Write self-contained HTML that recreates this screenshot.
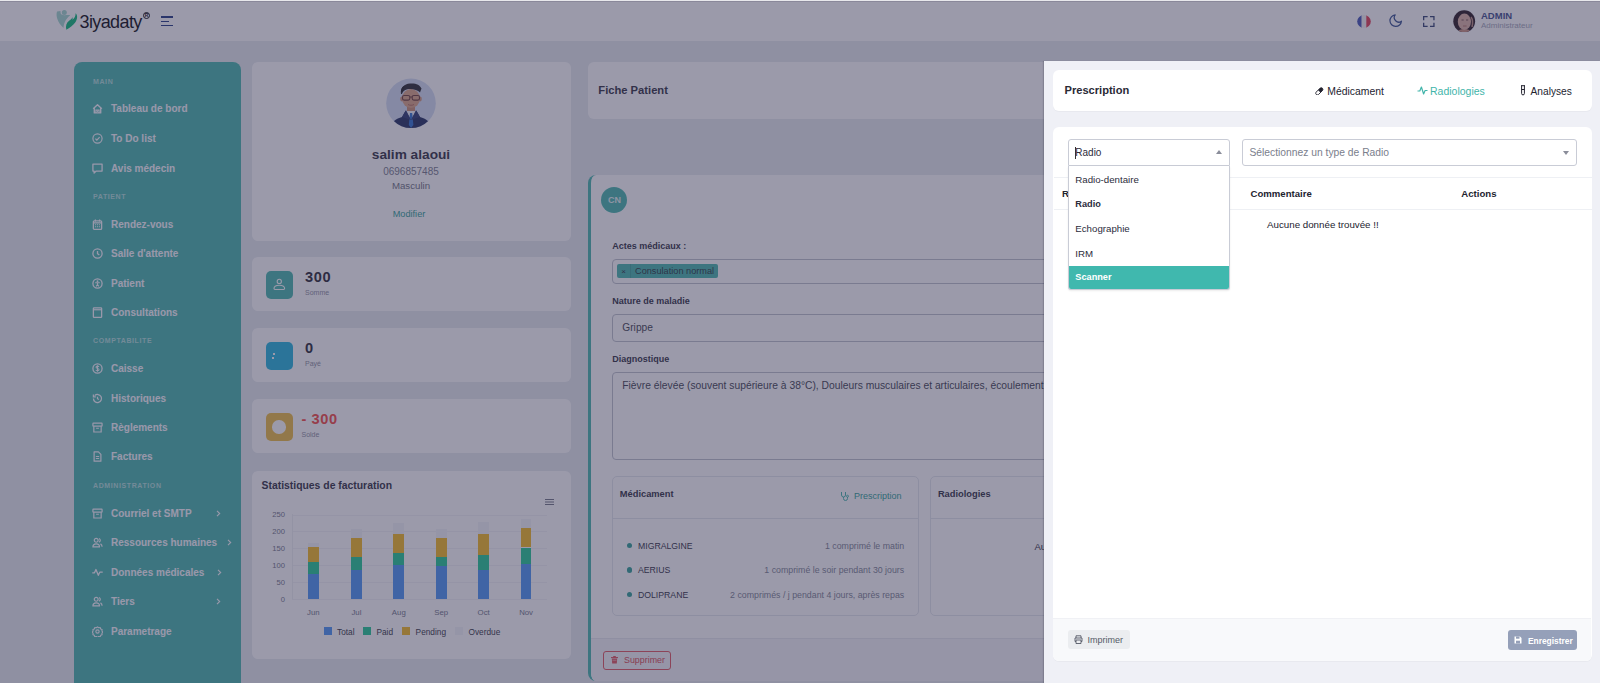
<!DOCTYPE html>
<html><head><meta charset="utf-8">
<style>
*{margin:0;padding:0;box-sizing:border-box}
html,body{width:1600px;height:683px;overflow:hidden;background:#e7ebef;font-family:"Liberation Sans",sans-serif;position:relative}
.a{position:absolute}
.t{position:absolute;white-space:nowrap;line-height:1}
.card{position:absolute;background:#fff;border-radius:6px}
#hdr{left:0;top:0;width:1600px;height:41px;background:#fff}
#side{left:74px;top:62px;width:167px;height:640px;background:#43b5ab;border-radius:8px 8px 0 0}
.cat{position:absolute;left:19px;font-size:7px;font-weight:bold;letter-spacing:0.6px;color:#a4dcd6;white-space:nowrap;line-height:1}
.mi{position:absolute;left:18px;height:14px;width:150px;color:#f4f6fb;font-size:11px;white-space:nowrap;line-height:14px}
.mi svg{position:absolute;left:0;top:1px;width:12px;height:12px}
.mi span{position:absolute;left:19px;top:0}
.mi .chev{position:absolute;top:-1px;font-size:12px}
#ovl{left:0;top:0;width:1600px;height:683px;background:rgba(55,53,85,0.5)}
</style></head>
<body>
<div class="a" id="hdr">
<svg class="a" style="left:52px;top:6px" width="32" height="28" viewBox="0 0 32 28">
<circle cx="12.3" cy="6.4" r="2.5" fill="#9fd6cc"/>
<path d="M5 5.6C3.6 10 5.5 16.5 11.5 22 11.8 18 13 13.5 18.3 9.3 15 8.6 12 10 9.6 8.6 8.6 7.8 8.4 6.3 8.5 4.9z" fill="#9fd6cc"/>
<path d="M23.6 7.2C25.7 9 25.7 13 23.2 16.5 21.2 19.4 17.6 22 14.3 23.7 13.4 20 14.4 16.6 17.4 14.6 19 13.5 20.1 12.4 20.9 11.1L20.4 13.7C22.6 12.2 23.7 10 23.6 7.2z" fill="#07b877"/>
</svg>
<div class="t" style="left:79.5px;top:13.46px;font-size:18px;color:#05050a;letter-spacing:-0.6px;">3iyadaty</div>
<div class="a" style="left:143px;top:12px;width:7px;height:7px;border:1.3px solid #05050a;border-radius:50%;font-size:5px;line-height:4.5px;text-align:center;color:#05050a;font-weight:bold">R</div>
<div class="a" style="left:160.6px;top:16.4px;width:12px;height:1.3px;background:#1d3580"></div><div class="a" style="left:160.6px;top:20.8px;width:8.2px;height:1.3px;background:#1d3580"></div><div class="a" style="left:160.6px;top:25.2px;width:12px;height:1.3px;background:#1d3580"></div>
<svg class="a" style="left:1357px;top:15px" width="14" height="13" viewBox="0 0 14 13"><defs><clipPath id="fc"><ellipse cx="7" cy="6.5" rx="6.8" ry="6.4"/></clipPath></defs>
<g clip-path="url(#fc)"><rect x="0" y="0" width="4.7" height="13" fill="#3f51b5"/><rect x="4.7" y="0" width="4.6" height="13" fill="#f2f2f2"/><rect x="9.3" y="0" width="4.7" height="13" fill="#e0384f"/></g></svg>
<svg class="a" style="left:1387.8px;top:13.1px" width="15.4" height="15.4" viewBox="0 0 24 24"><path d="M21 12.79A9 9 0 1 1 11.21 3 7 7 0 0 0 21 12.79z" fill="none" stroke="#2e4a8c" stroke-width="1.9" stroke-linejoin="round"/></svg>
<svg class="a" style="left:1423.4px;top:15.6px" width="11.6" height="11" viewBox="0 0 11.6 11"><path d="M0.65 4.3V0.65h4M7 0.65h3.95v3.65M10.95 6.7v3.65H7M4.65 10.35H0.65V6.7" fill="none" stroke="#2e3f70" stroke-width="1.3"/></svg>
<svg class="a" style="left:1452px;top:9px" width="25" height="25" viewBox="0 0 25 25"><defs><clipPath id="ua"><circle cx="12.2" cy="12.2" r="10.9"/></clipPath></defs>
<circle cx="12.2" cy="12.2" r="11.6" fill="#f4f5fa"/>
<g clip-path="url(#ua)"><rect width="25" height="25" fill="#24141c"/>
<path d="M5 26c0-4 2-6 7.2-6s7.2 2 7.2 6z" fill="#c98f7c"/>
<ellipse cx="12.4" cy="12.8" rx="6.6" ry="8.2" fill="#dcb0a2"/>
<path d="M19 8c1.5 2 2 6 1 10" stroke="#b88a7e" stroke-width="1.5" fill="none"/>
<path d="M9.5 11h2.2M14 11h2.2" stroke="#6a4a4a" stroke-width="0.9"/>
<path d="M11 17h3.6" stroke="#b27068" stroke-width="1.1"/>
</g></svg>
<div class="t" style="left:1481.0px;top:11.26px;font-size:9.5px;font-weight:bold;color:#3b4a8a;">ADMIN</div>
<div class="t" style="left:1481.0px;top:22.23px;font-size:8px;color:#a0a4b6;">Administrateur</div>
</div>
<div class="a" id="side"></div>
<div class="t" style="left:93.0px;top:78.27px;font-size:7px;font-weight:bold;letter-spacing:0.6px;color:#afdfda;">MAIN</div>
<div class="t" style="left:93.0px;top:192.87px;font-size:7px;font-weight:bold;letter-spacing:0.6px;color:#afdfda;">PATIENT</div>
<div class="t" style="left:93.0px;top:337.17px;font-size:7px;font-weight:bold;letter-spacing:0.6px;color:#afdfda;">COMPTABILITE</div>
<div class="t" style="left:93.0px;top:482.27px;font-size:7px;font-weight:bold;letter-spacing:0.6px;color:#afdfda;">ADMINISTRATION</div>
<svg class="a" style="left:91.8px;top:103.3px;color:#fbfaff" width="11" height="11" viewBox="0 0 12 12"><path d="M1.3 6.3L6 1.8l4.7 4.5M2.5 5.2V10.8h7V5.2" fill="none" stroke="currentColor" stroke-width="1.5" stroke-linejoin="round"/><path d="M4.3 10.8V7.8h3.4v3" fill="none" stroke="currentColor" stroke-width="1.3"/><circle cx="6" cy="9" r="0.7" fill="currentColor"/></svg>
<div class="t" style="left:111.0px;top:104.23px;font-size:10px;font-weight:bold;color:#fbfaff;">Tableau de bord</div>
<svg class="a" style="left:91.8px;top:133.1px;color:#fbfaff" width="11" height="11" viewBox="0 0 12 12"><circle cx="6" cy="6" r="5" fill="none" stroke="currentColor" stroke-width="1.3"/><path d="M3.7 6.2l1.6 1.5 3-3.2" fill="none" stroke="currentColor" stroke-width="1.3"/></svg>
<div class="t" style="left:111.0px;top:134.03px;font-size:10px;font-weight:bold;color:#fbfaff;">To Do list</div>
<svg class="a" style="left:91.8px;top:162.7px;color:#fbfaff" width="11" height="11" viewBox="0 0 12 12"><path d="M1 1.2h10v7.6H4.6L2.3 10.9V8.8H1z" fill="none" stroke="currentColor" stroke-width="1.4" stroke-linejoin="round"/></svg>
<div class="t" style="left:111.0px;top:163.63px;font-size:10px;font-weight:bold;color:#fbfaff;">Avis médecin</div>
<svg class="a" style="left:91.8px;top:218.8px;color:#fbfaff" width="11" height="11" viewBox="0 0 12 12"><rect x="1.5" y="2" width="9" height="9.3" rx="1" fill="none" stroke="currentColor" stroke-width="1.4"/><path d="M1.5 4.3h9M3.7 0.6v2.2M8.3 0.6v2.2" stroke="currentColor" stroke-width="1.3"/><path d="M3.3 6.2h1.2M5.4 6.2h1.2M7.5 6.2h1.2M3.3 8.4h1.2M5.4 8.4h1.2M7.5 8.4h1.2" stroke="currentColor" stroke-width="1.1"/></svg>
<div class="t" style="left:111.0px;top:219.73px;font-size:10px;font-weight:bold;color:#fbfaff;">Rendez-vous</div>
<svg class="a" style="left:91.8px;top:248.1px;color:#fbfaff" width="11" height="11" viewBox="0 0 12 12"><circle cx="6" cy="6" r="5" fill="none" stroke="currentColor" stroke-width="1.4"/><path d="M6 3.2V6.2l2 1.3" fill="none" stroke="currentColor" stroke-width="1.4"/></svg>
<div class="t" style="left:111.0px;top:249.03px;font-size:10px;font-weight:bold;color:#fbfaff;">Salle d'attente</div>
<svg class="a" style="left:91.8px;top:278.1px;color:#fbfaff" width="11" height="11" viewBox="0 0 12 12"><circle cx="6" cy="6" r="5" fill="none" stroke="currentColor" stroke-width="1.4"/><circle cx="6" cy="3.5" r="1" fill="currentColor"/><path d="M3.5 5.1h5M6 5.1v2.2M4.5 9.2l1.5-2 1.5 2" fill="none" stroke="currentColor" stroke-width="1.2"/></svg>
<div class="t" style="left:111.0px;top:279.04px;font-size:10px;font-weight:bold;color:#fbfaff;">Patient</div>
<svg class="a" style="left:91.8px;top:307.3px;color:#fbfaff" width="11" height="11" viewBox="0 0 12 12"><rect x="1.5" y="0.9" width="9" height="10.4" rx="0.8" fill="none" stroke="currentColor" stroke-width="1.4"/><path d="M1.5 3h9" stroke="currentColor" stroke-width="1.3"/></svg>
<div class="t" style="left:111.0px;top:308.24px;font-size:10px;font-weight:bold;color:#fbfaff;">Consultations</div>
<svg class="a" style="left:91.8px;top:362.9px;color:#fbfaff" width="11" height="11" viewBox="0 0 12 12"><circle cx="6" cy="6" r="5" fill="none" stroke="currentColor" stroke-width="1.4"/><path d="M7.6 4.2c-.4-.6-1-.8-1.7-.8-.9 0-1.5.5-1.5 1.2 0 1.6 3.3.9 3.3 2.6 0 .8-.7 1.3-1.7 1.3-.8 0-1.4-.3-1.8-.9M6 2.5v7" fill="none" stroke="currentColor" stroke-width="1.1"/></svg>
<div class="t" style="left:111.0px;top:363.84px;font-size:10px;font-weight:bold;color:#fbfaff;">Caisse</div>
<svg class="a" style="left:91.8px;top:392.7px;color:#fbfaff" width="11" height="11" viewBox="0 0 12 12"><path d="M1.6 6a4.4 4.4 0 1 0 1.3-3.1" fill="none" stroke="currentColor" stroke-width="1.4"/><path d="M1.5 1.6v2.7h2.7" fill="none" stroke="currentColor" stroke-width="1.3"/><path d="M6 4v2.2l1.5 1" fill="none" stroke="currentColor" stroke-width="1.3"/></svg>
<div class="t" style="left:111.0px;top:393.64px;font-size:10px;font-weight:bold;color:#fbfaff;">Historiques</div>
<svg class="a" style="left:91.8px;top:421.9px;color:#fbfaff" width="11" height="11" viewBox="0 0 12 12"><rect x="1" y="1.3" width="10" height="3.2" rx="0.5" fill="none" stroke="currentColor" stroke-width="1.3"/><path d="M2 4.5v6.4h8V4.5M4.5 6.8h3" fill="none" stroke="currentColor" stroke-width="1.3"/></svg>
<div class="t" style="left:111.0px;top:422.84px;font-size:10px;font-weight:bold;color:#fbfaff;">Règlements</div>
<svg class="a" style="left:91.8px;top:451.0px;color:#fbfaff" width="11" height="11" viewBox="0 0 12 12"><path d="M2.3 0.9h4.7l2.7 2.7v7.5H2.3z" fill="none" stroke="currentColor" stroke-width="1.3" stroke-linejoin="round"/><path d="M4.2 6h3.6M4.2 8.3h3.6" stroke="currentColor" stroke-width="1.1"/></svg>
<div class="t" style="left:111.0px;top:451.94px;font-size:10px;font-weight:bold;color:#fbfaff;">Factures</div>
<svg class="a" style="left:91.8px;top:507.9px;color:#fbfaff" width="11" height="11" viewBox="0 0 12 12"><rect x="1" y="1.3" width="10" height="3.2" rx="0.5" fill="none" stroke="currentColor" stroke-width="1.3"/><path d="M2 4.5v6.4h8V4.5M4.5 6.8h3" fill="none" stroke="currentColor" stroke-width="1.3"/></svg>
<div class="t" style="left:111.0px;top:508.84px;font-size:10px;font-weight:bold;color:#fbfaff;">Courriel et SMTP</div>
<svg class="a" style="left:216px;top:509.7px" width="5" height="7" viewBox="0 0 5 7"><path d="M1 0.8l2.7 2.7L1 6.2" fill="none" stroke="#fbfaff" stroke-width="1.1"/></svg>
<svg class="a" style="left:91.8px;top:537.4px;color:#fbfaff" width="11" height="11" viewBox="0 0 12 12"><circle cx="4.6" cy="3.6" r="2.1" fill="none" stroke="currentColor" stroke-width="1.3"/><path d="M1 10.8c0-2.1 1.5-3.4 3.6-3.4s3.6 1.3 3.6 3.4z" fill="none" stroke="currentColor" stroke-width="1.3" stroke-linejoin="round"/><path d="M7.6 1.6a2.1 2.1 0 0 1 0 4M9.3 7.5c1 .6 1.7 1.7 1.7 3.2" fill="none" stroke="currentColor" stroke-width="1.3"/></svg>
<div class="t" style="left:111.0px;top:538.34px;font-size:10px;font-weight:bold;color:#fbfaff;">Ressources humaines</div>
<svg class="a" style="left:227px;top:539.2px" width="5" height="7" viewBox="0 0 5 7"><path d="M1 0.8l2.7 2.7L1 6.2" fill="none" stroke="#fbfaff" stroke-width="1.1"/></svg>
<svg class="a" style="left:91.8px;top:566.9px;color:#fbfaff" width="11" height="11" viewBox="0 0 12 12"><path d="M0.3 6.3h2.4l1.6-3.6 2.6 6.4 1.6-3.4h3.2" fill="none" stroke="currentColor" stroke-width="1.4" stroke-linejoin="round"/></svg>
<div class="t" style="left:111.0px;top:567.84px;font-size:10px;font-weight:bold;color:#fbfaff;">Données médicales</div>
<svg class="a" style="left:216.7px;top:568.7px" width="5" height="7" viewBox="0 0 5 7"><path d="M1 0.8l2.7 2.7L1 6.2" fill="none" stroke="#fbfaff" stroke-width="1.1"/></svg>
<svg class="a" style="left:91.8px;top:596.3px;color:#fbfaff" width="11" height="11" viewBox="0 0 12 12"><circle cx="4.6" cy="3.6" r="2.1" fill="none" stroke="currentColor" stroke-width="1.3"/><path d="M1 10.8c0-2.1 1.5-3.4 3.6-3.4s3.6 1.3 3.6 3.4z" fill="none" stroke="currentColor" stroke-width="1.3" stroke-linejoin="round"/><path d="M7.6 1.6a2.1 2.1 0 0 1 0 4M9.3 7.5c1 .6 1.7 1.7 1.7 3.2" fill="none" stroke="currentColor" stroke-width="1.3"/></svg>
<div class="t" style="left:111.0px;top:597.24px;font-size:10px;font-weight:bold;color:#fbfaff;">Tiers</div>
<svg class="a" style="left:216px;top:598.1px" width="5" height="7" viewBox="0 0 5 7"><path d="M1 0.8l2.7 2.7L1 6.2" fill="none" stroke="#fbfaff" stroke-width="1.1"/></svg>
<svg class="a" style="left:91.8px;top:625.6px;color:#fbfaff" width="11" height="11" viewBox="0 0 12 12"><path d="M6 0.9l1.3 1 1.6-.2.6 1.5 1.5.6-.2 1.6 1 1.3-1 1.3.2 1.6-1.5.6-.6 1.5-1.6-.2-1.3 1-1.3-1-1.6.2-.6-1.5-1.5-.6.2-1.6-1-1.3 1-1.3-.2-1.6 1.5-.6.6-1.5 1.6.2z" fill="none" stroke="currentColor" stroke-width="1.2" stroke-linejoin="round"/><circle cx="6" cy="6" r="1.8" fill="none" stroke="currentColor" stroke-width="1.2"/></svg>
<div class="t" style="left:111.0px;top:626.53px;font-size:10px;font-weight:bold;color:#fbfaff;">Parametrage</div>
<div class="card" style="left:252px;top:62px;width:319px;height:178.5px"></div>
<svg class="a" style="left:380px;top:72px" width="62" height="62" viewBox="0 0 62 62"><defs><clipPath id="av"><circle cx="31" cy="31.3" r="24.8"/></clipPath></defs>
<g clip-path="url(#av)"><rect width="62" height="62" fill="#d3ddf3"/>
<path d="M9 60c1-9 6-13 13-15l4-7h10l4 7c7 2 12 6 13 15z" fill="#1c2a5c"/>
<path d="M25 38l6 10 6-10z" fill="#f1f3f8"/>
<path d="M30 41h2.2l1.2 12-2.3 3-2.3-3z" fill="#2b6fd0"/>
<path d="M22 45l4-7 5 10z M40 45l-4-7-5 10z" fill="#26356e"/>
<rect x="27" y="32" width="8" height="7" fill="#c98d70"/>
<ellipse cx="31" cy="26.5" rx="9" ry="9.5" fill="#dba283"/>
<ellipse cx="21.8" cy="27" rx="1.6" ry="2.4" fill="#d09578"/><ellipse cx="40.2" cy="27" rx="1.6" ry="2.4" fill="#d09578"/>
<path d="M21 22c-1-6 3-10 9-10.5 6-.5 10 1.5 11.5 5l-1.5 4c-2-2-6-3.5-10-3.5-4 0-7 1.5-8 5z" fill="#26272d"/>
<path d="M21 19c0-3 2-5 4-5.5-1 2-2 4-2.5 7z" fill="#1d1e22"/>
<rect x="22.5" y="23.5" width="7.3" height="4.6" rx="1.6" fill="none" stroke="#6b3a35" stroke-width="1.1"/><rect x="32.2" y="23.5" width="7.3" height="4.6" rx="1.6" fill="none" stroke="#6b3a35" stroke-width="1.1"/>
<path d="M29.8 25h2.4" stroke="#6b3a35" stroke-width="1"/>
<path d="M28 32.5c1.5 1 4.5 1 6 0" stroke="#a85e50" stroke-width="0.8" fill="none"/>
</g></svg>
<div class="t" style="left:411.0px;top:148.40px;font-size:13.7px;transform:translateX(-50%);font-weight:bold;color:#2c2c3c;">salim alaoui</div>
<div class="t" style="left:411.0px;top:166.97px;font-size:10px;transform:translateX(-50%);color:#74778a;">0696857485</div>
<div class="t" style="left:411.0px;top:180.93px;font-size:9.7px;transform:translateX(-50%);color:#6c6f80;">Masculin</div>
<div class="t" style="left:409.0px;top:209.58px;font-size:9.2px;transform:translateX(-50%);color:#2a9d94;">Modifier</div>
<div class="card" style="left:252px;top:257px;width:319px;height:54px"></div>
<div class="a" style="left:266px;top:270.5px;width:27.2px;height:28px;border-radius:5px;background:#43b5ab"></div>
<svg class="a" style="left:273px;top:278px" width="13" height="13" viewBox="0 0 13 13"><circle cx="6.3" cy="3.4" r="2.1" fill="none" stroke="#fff" stroke-width="1.1"/><path d="M1 10.6c0-1.9 2.3-3.3 5.3-3.3s5.3 1.4 5.3 3.3c0 .6-.4.9-1 .9H2c-.6 0-1-.3-1-.9z" fill="none" stroke="#fff" stroke-width="1.1"/></svg>
<div class="t" style="left:305.0px;top:269.84px;font-size:14.6px;font-weight:bold;color:#23232f;letter-spacing:0.6px;">300</div>
<div class="t" style="left:305.0px;top:289.07px;font-size:7px;color:#8a8c9c;">Somme</div>
<div class="card" style="left:252px;top:328px;width:319px;height:54px"></div>
<div class="a" style="left:266px;top:341.5px;width:27.2px;height:28px;border-radius:5px;background:#1fb3dd"></div>
<div class="a" style="left:272.5px;top:353px;width:2.5px;height:2px;background:#fff"></div><div class="a" style="left:271.5px;top:356.5px;width:2.5px;height:2px;background:#fff"></div>
<div class="t" style="left:305.0px;top:340.84px;font-size:14.6px;font-weight:bold;color:#23232f;letter-spacing:0.6px;">0</div>
<div class="t" style="left:305.0px;top:360.07px;font-size:7px;color:#8a8c9c;">Payé</div>
<div class="card" style="left:252px;top:399px;width:319px;height:54px"></div>
<div class="a" style="left:266px;top:412.5px;width:27.2px;height:28px;border-radius:5px;background:#edbb3f"></div>
<div class="a" style="left:272.3px;top:420.3px;width:13.6px;height:13.6px;border-radius:50%;background:#fff"></div>
<div class="t" style="left:301.5px;top:411.84px;font-size:14.6px;font-weight:bold;color:#f5463e;letter-spacing:0.6px;">- 300</div>
<div class="t" style="left:301.5px;top:431.07px;font-size:7px;color:#8a8c9c;">Solde</div>
<div class="card" style="left:252px;top:470.5px;width:319px;height:188px"></div>
<div class="t" style="left:261.5px;top:481.20px;font-size:10.4px;font-weight:bold;color:#2c2c3c;">Statistiques de facturation</div>
<div class="a" style="left:545px;top:499px;width:9px;height:1.3px;background:#6e7383;box-shadow:0 2.5px 0 #6e7383,0 5px 0 #6e7383"></div>
<div class="a" style="left:292px;top:598.6px;width:255px;height:1px;background:#f2f3f6"></div>
<div class="t" style="left:285.0px;top:595.58px;font-size:7.6px;transform:translateX(-100%);color:#6e7285;">0</div>
<div class="a" style="left:292px;top:581.8px;width:255px;height:1px;background:#f2f3f6"></div>
<div class="t" style="left:285.0px;top:578.76px;font-size:7.6px;transform:translateX(-100%);color:#6e7285;">50</div>
<div class="a" style="left:292px;top:565.0px;width:255px;height:1px;background:#f2f3f6"></div>
<div class="t" style="left:285.0px;top:561.94px;font-size:7.6px;transform:translateX(-100%);color:#6e7285;">100</div>
<div class="a" style="left:292px;top:548.1px;width:255px;height:1px;background:#f2f3f6"></div>
<div class="t" style="left:285.0px;top:545.12px;font-size:7.6px;transform:translateX(-100%);color:#6e7285;">150</div>
<div class="a" style="left:292px;top:531.3px;width:255px;height:1px;background:#f2f3f6"></div>
<div class="t" style="left:285.0px;top:528.30px;font-size:7.6px;transform:translateX(-100%);color:#6e7285;">200</div>
<div class="a" style="left:292px;top:514.5px;width:255px;height:1px;background:#f2f3f6"></div>
<div class="t" style="left:285.0px;top:511.48px;font-size:7.6px;transform:translateX(-100%);color:#6e7285;">250</div>
<div class="a" style="left:292px;top:514px;width:1px;height:85px;background:#eef0f3"></div>
<div class="a" style="left:307.9px;top:543.2px;width:10.8px;height:3.6px;background:#f3f4f9"></div>
<div class="a" style="left:307.9px;top:546.8px;width:10.8px;height:15.0px;background:#f4b81c"></div>
<div class="a" style="left:307.9px;top:561.8px;width:10.8px;height:11.8px;background:#1cc992"></div>
<div class="a" style="left:307.9px;top:573.6px;width:10.8px;height:25.0px;background:#4993f4"></div>
<div class="t" style="left:313.3px;top:609.28px;font-size:7.8px;transform:translateX(-50%);color:#6e7285;">Jun</div>
<div class="a" style="left:351px;top:528.5px;width:10.8px;height:9.2px;background:#f3f4f9"></div>
<div class="a" style="left:351px;top:537.7px;width:10.8px;height:18.9px;background:#f4b81c"></div>
<div class="a" style="left:351px;top:556.6px;width:10.8px;height:13.7px;background:#1cc992"></div>
<div class="a" style="left:351px;top:570.3px;width:10.8px;height:28.3px;background:#4993f4"></div>
<div class="t" style="left:356.4px;top:609.28px;font-size:7.8px;transform:translateX(-50%);color:#6e7285;">Jul</div>
<div class="a" style="left:393.4px;top:523px;width:10.8px;height:10.8px;background:#f3f4f9"></div>
<div class="a" style="left:393.4px;top:533.8px;width:10.8px;height:19.2px;background:#f4b81c"></div>
<div class="a" style="left:393.4px;top:553px;width:10.8px;height:12.0px;background:#1cc992"></div>
<div class="a" style="left:393.4px;top:565px;width:10.8px;height:33.6px;background:#4993f4"></div>
<div class="t" style="left:398.8px;top:609.28px;font-size:7.8px;transform:translateX(-50%);color:#6e7285;">Aug</div>
<div class="a" style="left:435.8px;top:528.5px;width:10.8px;height:9.8px;background:#f3f4f9"></div>
<div class="a" style="left:435.8px;top:538.3px;width:10.8px;height:19.0px;background:#f4b81c"></div>
<div class="a" style="left:435.8px;top:557.3px;width:10.8px;height:8.7px;background:#1cc992"></div>
<div class="a" style="left:435.8px;top:566px;width:10.8px;height:32.6px;background:#4993f4"></div>
<div class="t" style="left:441.2px;top:609.28px;font-size:7.8px;transform:translateX(-50%);color:#6e7285;">Sep</div>
<div class="a" style="left:478.3px;top:522px;width:10.8px;height:11.8px;background:#f3f4f9"></div>
<div class="a" style="left:478.3px;top:533.8px;width:10.8px;height:20.8px;background:#f4b81c"></div>
<div class="a" style="left:478.3px;top:554.6px;width:10.8px;height:15.1px;background:#1cc992"></div>
<div class="a" style="left:478.3px;top:569.7px;width:10.8px;height:28.9px;background:#4993f4"></div>
<div class="t" style="left:483.7px;top:609.28px;font-size:7.8px;transform:translateX(-50%);color:#6e7285;">Oct</div>
<div class="a" style="left:520.7px;top:519.4px;width:10.8px;height:8.5px;background:#f3f4f9"></div>
<div class="a" style="left:520.7px;top:527.9px;width:10.8px;height:19.6px;background:#f4b81c"></div>
<div class="a" style="left:520.7px;top:547.5px;width:10.8px;height:16.3px;background:#1cc992"></div>
<div class="a" style="left:520.7px;top:563.8px;width:10.8px;height:34.8px;background:#4993f4"></div>
<div class="t" style="left:526.1px;top:609.28px;font-size:7.8px;transform:translateX(-50%);color:#6e7285;">Nov</div>
<div class="a" style="left:323.5px;top:627px;width:8px;height:8px;background:#4993f4"></div>
<div class="t" style="left:337.0px;top:627.63px;font-size:8.3px;color:#2f3240;">Total</div>
<div class="a" style="left:363px;top:627px;width:8px;height:8px;background:#1cc992"></div>
<div class="t" style="left:376.4px;top:627.63px;font-size:8.3px;color:#2f3240;">Paid</div>
<div class="a" style="left:402px;top:627px;width:8px;height:8px;background:#f4b81c"></div>
<div class="t" style="left:415.6px;top:627.63px;font-size:8.3px;color:#2f3240;">Pending</div>
<div class="a" style="left:455.4px;top:627px;width:8px;height:8px;background:#f3f4f9"></div>
<div class="t" style="left:468.5px;top:627.63px;font-size:8.3px;color:#2f3240;">Overdue</div>
<div class="card" style="left:588px;top:62px;width:1003px;height:57px"></div>
<div class="t" style="left:598.3px;top:84.52px;font-size:11.2px;font-weight:bold;color:#2c2c3c;">Fiche Patient</div>
<div class="card" style="left:587.5px;top:174.5px;width:1004px;height:506px;border-left:3px solid #43b5ab;border-radius:8px"></div>
<div class="a" style="left:601.2px;top:187.3px;width:26px;height:26px;border-radius:50%;background:#43b5ab"></div>
<div class="t" style="left:614.4px;top:196.28px;font-size:9px;transform:translateX(-50%);color:#e4f2f1;font-weight:bold;">CN</div>
<div class="t" style="left:612.2px;top:242.18px;font-size:9px;font-weight:bold;color:#2c2c3c;">Actes médicaux :</div>
<div class="a" style="left:612px;top:259.4px;width:980px;height:24.2px;border:1px solid #bcc0cb;border-radius:4px"></div>
<div class="a" style="left:617.3px;top:264.2px;width:100.7px;height:13.6px;background:#43b5ab;border-radius:2px"></div>
<div class="t" style="left:621.3px;top:267.78px;font-size:8px;color:#2c2c3c;">×</div>
<div class="a" style="left:629.8px;top:264.2px;width:1px;height:13.6px;background:#3aa39a"></div>
<div class="t" style="left:635.0px;top:267.18px;font-size:9.2px;color:#24343a;">Consulation normal</div>
<div class="t" style="left:612.2px;top:297.08px;font-size:9px;font-weight:bold;color:#2c2c3c;">Nature de maladie</div>
<div class="a" style="left:612px;top:314px;width:980px;height:27.6px;border:1px solid #bcc0cb;border-radius:4px"></div>
<div class="t" style="left:622.3px;top:322.97px;font-size:10.2px;color:#3a3d4c;">Grippe</div>
<div class="t" style="left:612.2px;top:355.28px;font-size:9px;font-weight:bold;color:#2c2c3c;">Diagnostique</div>
<div class="a" style="left:612px;top:372.2px;width:980px;height:88px;border:1px solid #bcc0cb;border-radius:4px"></div>
<div class="t" style="left:622.3px;top:381.02px;font-size:10.3px;color:#3a3d4c;">Fièvre élevée (souvent supérieure à 38°C), Douleurs musculaires et articulaires, écoulement nasal</div>
<div class="a" style="left:612px;top:475.7px;width:306.6px;height:140.3px;border:1px solid #e3e6ec;border-radius:5px"></div>
<div class="a" style="left:612px;top:518px;width:306.6px;height:1px;background:#e3e6ec"></div>
<div class="t" style="left:619.8px;top:490.13px;font-size:9.3px;font-weight:bold;color:#2c2c3c;">Médicament</div>
<svg class="a" style="left:840px;top:491px" width="9" height="10" viewBox="0 0 9 10"><path d="M1.5 1v3a2 2 0 0 0 4 0V1M3.5 6v1.5a2 2 0 0 0 4 0V6" fill="none" stroke="#43b5ab" stroke-width="1"/><circle cx="7.5" cy="5.2" r="1" fill="none" stroke="#43b5ab" stroke-width="0.9"/></svg>
<div class="t" style="left:854.0px;top:492.28px;font-size:9px;color:#2a9d94;">Prescription</div>
<div class="a" style="left:626.8px;top:542.7px;width:5.6px;height:5.6px;border-radius:50%;background:#2a9d94"></div>
<div class="t" style="left:638.0px;top:541.93px;font-size:8.7px;color:#2c2c3c;">MIGRALGINE</div>
<div class="t" style="left:904.2px;top:541.88px;font-size:8.8px;transform:translateX(-100%);color:#7a7e90;">1 comprimé le matin</div>
<div class="a" style="left:626.8px;top:567.2px;width:5.6px;height:5.6px;border-radius:50%;background:#2a9d94"></div>
<div class="t" style="left:638.0px;top:566.43px;font-size:8.7px;color:#2c2c3c;">AERIUS</div>
<div class="t" style="left:904.2px;top:566.38px;font-size:8.8px;transform:translateX(-100%);color:#7a7e90;">1 comprimé le soir pendant 30 jours</div>
<div class="a" style="left:626.8px;top:591.7px;width:5.6px;height:5.6px;border-radius:50%;background:#2a9d94"></div>
<div class="t" style="left:638.0px;top:590.93px;font-size:8.7px;color:#2c2c3c;">DOLIPRANE</div>
<div class="t" style="left:904.2px;top:590.88px;font-size:8.8px;transform:translateX(-100%);color:#7a7e90;">2 comprimés / j pendant 4 jours, après repas</div>
<div class="a" style="left:930.4px;top:475.7px;width:306.6px;height:140.3px;border:1px solid #e3e6ec;border-radius:5px"></div>
<div class="a" style="left:930.4px;top:518px;width:306.6px;height:1px;background:#e3e6ec"></div>
<div class="t" style="left:937.9px;top:490.13px;font-size:9.3px;font-weight:bold;color:#2c2c3c;">Radiologies</div>
<div class="t" style="left:1034.5px;top:541.53px;font-size:9.5px;color:#2c2c3c;">Aucune donnée trouvée !!</div>
<div class="a" style="left:590.5px;top:638px;width:1001px;height:42.5px;background:#f4f5f8;border-top:1px solid #e6e8ee;border-radius:0 0 8px 5px/0 0 8px 8px"></div>
<div class="a" style="left:603.2px;top:650.7px;width:68.2px;height:19px;border:1px solid #e0525c;border-radius:3px"></div>
<svg class="a" style="left:610.5px;top:656.3px" width="7" height="7.4" viewBox="0 0 7 7.4"><rect x="2.2" y="0" width="2.6" height="1" fill="#e0525c"/><rect x="0" y="1" width="7" height="1.1" fill="#e0525c"/><path d="M0.8 2.6h5.4l-.4 4.8H1.2z" fill="#e0525c"/><path d="M1.5 4.3h4" stroke="#f6d3d6" stroke-width="0.6"/></svg>
<div class="t" style="left:624.0px;top:656.13px;font-size:8.9px;color:#d9444e;">Supprimer</div>
<div class="a" id="ovl"></div>
<div class="a" style="left:0;top:0;width:1600px;height:1px;background:#e8e8ec"></div><div class="a" style="left:0;top:1px;width:1600px;height:1px;background:#8a889a"></div>
<div class="a" style="left:1044px;top:61px;width:556px;height:622px;background:#eff0f6;box-shadow:-1px 0 1px rgba(20,20,40,0.18)"></div>
<div class="card" style="left:1053px;top:70px;width:538.5px;height:40.5px;box-shadow:0 1px 1px rgba(0,0,0,0.03)"></div>
<div class="t" style="left:1064.5px;top:85.00px;font-size:11.1px;font-weight:bold;color:#2a2a36;">Prescription</div>
<svg class="a" style="left:1315.3px;top:86.6px" width="8.4" height="8.4" viewBox="0 0 10 10"><path d="M6.2 1.3a2 2 0 0 1 2.8 2.8L4.1 9a2 2 0 0 1-2.8-2.8z" fill="none" stroke="#23232f" stroke-width="1.1"/><path d="M3.7 3.8l2.8 2.8L9 4.1A2 2 0 0 0 6.2 1.3z" fill="#23232f"/></svg>
<div class="t" style="left:1327.3px;top:86.70px;font-size:10.4px;color:#23232f;">Médicament</div>
<svg class="a" style="left:1417px;top:86px" width="11" height="9" viewBox="0 0 11 9"><path d="M0.5 5h2.3l1.6-4 2.2 7 1.5-3.5h2.4" fill="none" stroke="#43b5ab" stroke-width="1.2" stroke-linejoin="round"/></svg>
<div class="t" style="left:1430.0px;top:86.41px;font-size:10.5px;color:#3fb5aa;">Radiologies</div>
<svg class="a" style="left:1520px;top:85px" width="6" height="11" viewBox="0 0 6 11"><path d="M1 .7h4M1.6 .7v7.8a1.4 1.4 0 0 0 2.8 0V.7M1.6 4.5h2.8" fill="none" stroke="#23232f" stroke-width="1"/></svg>
<div class="t" style="left:1530.5px;top:86.87px;font-size:10.2px;color:#23232f;">Analyses</div>
<div class="card" style="left:1052.8px;top:127px;width:538.8px;height:533.5px;overflow:hidden;box-shadow:0 1px 1px rgba(0,0,0,0.03)">
<div class="a" style="left:0;top:491px;width:538px;height:42.5px;background:#f8f9fb;border-top:1px solid #f0f1f5"></div>
</div>
<div class="a" style="left:1067.8px;top:139px;width:162px;height:27.4px;border:1px solid #c9ccd6;border-radius:3px 3px 0 0;background:#fff"></div>
<div class="a" style="left:1075px;top:146.5px;width:1px;height:12px;background:#333"></div>
<div class="t" style="left:1075.3px;top:148.07px;font-size:10px;color:#2c2c3c;">Radio</div>
<div class="a" style="left:1215.5px;top:150px;width:0;height:0;border-left:3.5px solid transparent;border-right:3.5px solid transparent;border-bottom:4px solid #8a8d9a"></div>
<div class="a" style="left:1241.7px;top:139px;width:335.6px;height:27.4px;border:1px solid #c9ccd6;border-radius:3px;background:#fff"></div>
<div class="t" style="left:1249.4px;top:147.92px;font-size:10.3px;color:#7a7e8c;">Sélectionnez un type de Radio</div>
<div class="a" style="left:1562.5px;top:150.5px;width:0;height:0;border-left:3.5px solid transparent;border-right:3.5px solid transparent;border-top:4px solid #8a8d9a"></div>
<div class="a" style="left:1053.5px;top:177.4px;width:538px;height:1px;background:#eef0f4"></div>
<div class="a" style="left:1053.5px;top:209.2px;width:538px;height:1px;background:#eef0f4"></div>
<div class="t" style="left:1062.0px;top:188.58px;font-size:9.6px;font-weight:bold;color:#23232f;">R</div>
<div class="t" style="left:1250.5px;top:188.58px;font-size:9.6px;font-weight:bold;color:#23232f;">Commentaire</div>
<div class="t" style="left:1461.3px;top:188.58px;font-size:9.6px;font-weight:bold;color:#23232f;">Actions</div>
<div class="t" style="left:1267.0px;top:219.90px;font-size:9.75px;color:#23232f;">Aucune donnée trouvée !!</div>
<div class="a" style="left:1067.8px;top:166.4px;width:162px;height:123.3px;border:1px solid #c9ccd6;border-top:none;background:#fff;border-radius:0 0 3px 3px;overflow:hidden;box-shadow:0 1px 2px rgba(0,0,0,0.08)">
<div class="a" style="left:0;top:99.6px;width:162px;height:24px;background:#40b8ae"></div>
</div>
<div class="t" style="left:1075.3px;top:174.53px;font-size:9.7px;color:#2c2c3c;">Radio-dentaire</div>
<div class="t" style="left:1075.3px;top:199.98px;font-size:9.2px;color:#2c2c3c;font-weight:bold;">Radio</div>
<div class="t" style="left:1075.3px;top:224.03px;font-size:9.7px;color:#2c2c3c;">Echographie</div>
<div class="t" style="left:1075.3px;top:248.73px;font-size:9.7px;color:#2c2c3c;">IRM</div>
<div class="t" style="left:1075.3px;top:273.28px;font-size:9.2px;color:#fff;font-weight:bold;">Scanner</div>
<div class="a" style="left:1067.5px;top:629.6px;width:62.2px;height:19.6px;background:#ebedf0;border-radius:3px"></div>
<svg class="a" style="left:1074px;top:635px" width="9" height="9" viewBox="0 0 9 9"><path d="M2 3V.8h5V3M2 6.5H1V3h7v3.5H7M2 5h5v3.5H2z" fill="none" stroke="#555a66" stroke-width="0.9"/></svg>
<div class="t" style="left:1087.5px;top:636.28px;font-size:9px;color:#555a66;">Imprimer</div>
<div class="a" style="left:1507.7px;top:629.8px;width:69.6px;height:20px;background:#95a0b9;border-radius:3px"></div>
<svg class="a" style="left:1514px;top:635.5px" width="8" height="8" viewBox="0 0 8 8"><path d="M0.5 0.5h5.5l1.5 1.5v5.5h-7z" fill="#fff"/><rect x="2" y="0.5" width="3.5" height="2.2" fill="#95a0b9"/><rect x="2" y="4.7" width="4" height="2.8" fill="#95a0b9"/></svg>
<div class="t" style="left:1528.0px;top:636.78px;font-size:8.4px;color:#fff;font-weight:bold;">Enregistrer</div>
</body></html>
